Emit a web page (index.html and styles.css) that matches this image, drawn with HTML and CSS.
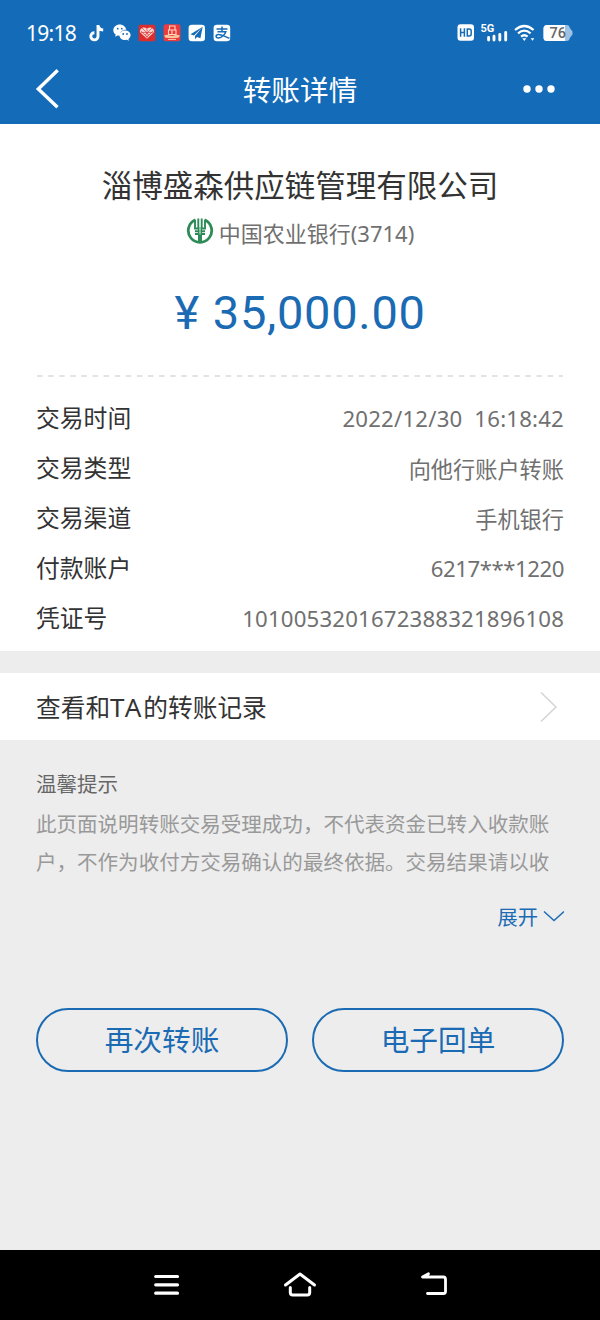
FILE: index.html
```
<!DOCTYPE html>
<html lang="zh-CN">
<head>
	<meta charset="UTF-8">
	<title>转账详情</title>
	<link rel="stylesheet" href="styles.css">
</head>
<body>

<header class="top">
	<div class="status">
		<span class="clock">19:18</span>
		<div class="apps">
			<svg width="17" height="18" viewBox="0 0 17 18"><path d="M9 1v11.2a3.6 3.6 0 1 1-3.6-3.5M9 1.5c.4 2.7 2.3 4.3 5.2 4.5" fill="none" stroke="#fff" stroke-width="2.900"/></svg>
			<svg width="18" height="18" viewBox="0 0 18 18">
				<path d="M6.800.5C3 .5.300 3 .300 6.200c0 1.800.9 3.300 2.400 4.400l-.6 2.200 2.400-1.300 2.500.3c-.6-4 2.400-6.200 6.300-6C12.600 2.600 10 .5 6.800.5z" fill="#fff"/>
				<path d="M12 6.500c-3.200 0-5.500 2-5.500 4.700S8.800 16 12 16l1.900-.3 2 1.100-.5-1.900c1.400-.9 2.200-2.200 2.200-3.700 0-2.700-2.400-4.700-5.600-4.700z" fill="#fff"/>
				<g fill="#146bb7"><circle cx="4.700" cy="4.700" r=".9"/><circle cx="8.800" cy="4.700" r=".9"/><circle cx="10.200" cy="10" r=".9"/><circle cx="14" cy="10" r=".9"/></g>
			</svg>
			<svg width="18" height="18" viewBox="0 0 18 18">
				<rect x=".7" y=".7" width="16.600" height="16.600" rx="1.500" fill="#dd2c2c"/>
				<path d="M9 14.800L2.300 8.600C.9 5 5.500 1.500 9 4.800c3.500-3.300 8.100.2 6.700 3.800z" fill="#fbd3cd"/>
				<path d="M3 7l6 6 6-6M4 4l7 7M14 4l-7 7M9 5v9M3 8.500h12" fill="none" stroke="#dd2c2c" stroke-width=".6"/>
			</svg>
			<svg width="18" height="18" viewBox="0 0 18 18">
				<rect x=".5" y=".3" width="17" height="17" rx="2.500" fill="#ea3b3e"/>
				<path d="M6.500 2h5.500v4H6.500zM5.500 6h3.500v4.500H5.500zM9 6h4v4.500H9z" fill="none" stroke="#ffd8bd" stroke-width="1.100"/>
				<path d="M1 11.500l3-.7 5 1.200 5-1.200 3 .7-1.500 2.300-6.500.5-6.500-.5z" fill="#f7c79c"/>
				<path d="M5 15.500h8" stroke="#ffb9a5"/>
			</svg>
			<svg width="18" height="18" viewBox="0 0 18 18">
				<rect x=".6" y=".8" width="16.400" height="16.400" rx="3.300" fill="#fff"/>
				<path d="M14.700 2.800L2.500 10.200l3.500 1.300zM14.700 2.800L7 12v3.200l2-2.300 3.400 1.300z" fill="#146bb7"/>
			</svg>
			<svg width="18" height="18" viewBox="0 0 18 18">
				<rect x=".6" y=".8" width="16.600" height="16.400" rx="3.300" fill="#fff"/>
				<path d="M3.500 5h11M9 2.500v5M4.500 7.700h8.300c-.8 2.600-4 6.300-7.300 6.300-3.200 0-3.200-3.400-.2-3.400 3 0 6.200 1.800 11.200 3.600" fill="none" stroke="#146bb7" stroke-width="1.500"/>
			</svg>
		</div>
		<div class="signals">
			<svg width="18" height="18" viewBox="0 0 18 18">
				<rect x=".5" y=".2" width="16.500" height="16.600" rx="3" fill="#fff"/>
				<path d="M3.600 4.300v8.400M7.400 4.300v8.400M3.600 8.500h3.800M10.300 5h2q1.900 0 1.900 1.900v3.200q0 1.900-1.900 1.900h-2z" fill="none" stroke="#146bb7" stroke-width="1.500"/>
			</svg>
			<svg class="cell" width="28" height="20" viewBox="0 0 28 20">
				<text class="net" x="0.500" y="9">5G</text>
				<path d="M8.600 14.500v2.500M14 13.300v3.700M19.800 11.500V17M25.700 9.500V17" stroke="#fff" stroke-width="2.900" stroke-linecap="round"/>
			</svg>
			<svg class="wifi" width="21" height="18" viewBox="0 0 21 18">
				<path d="M1 6q9.300-8 18.600 0M4 9.300q6.300-5.200 12.600 0M7 12.600q3.300-2.700 6.600 0" fill="none" stroke="#fff" stroke-width="2.200"/>
				<path d="M8.300 14.300h4L10.300 17zM16.600 14.300h3.700l-1.800 2.500z" fill="#fff"/>
			</svg>
			<svg class="battery" width="31" height="18" viewBox="0 0 31 18">
				<path d="M4 1h19.500q3 0 3.300 3l2.700 3.500v3L26.800 14q-.3 3-3.300 3H4q-3.500 0-3.500-3.500v-9Q.5 1 4 1z" fill="#9cc2e6"/>
				<path d="M4 1h18v16H4Q.5 17 .5 13.500v-9Q.5 1 4 1z" fill="#fff"/>
				<text class="level" x="6.500" y="14">76</text>
			</svg>
		</div>
	</div>
	<div class="navbar">
		<svg class="back" width="24" height="42" viewBox="0 0 24 42"><path d="M22.700 2.200L3.300 21l19.200 18.200" fill="none" stroke="#fff" stroke-width="3.400"/></svg>
		<h1>转账详情</h1>
		<svg class="more" width="34" height="10" viewBox="0 0 34 10"><g fill="#fff"><circle cx="5" cy="5" r="3.700"/><circle cx="17" cy="5" r="3.700"/><circle cx="29" cy="5" r="3.700"/></g></svg>
	</div>
</header>

<section class="detail">
	<h2>淄博盛森供应链管理有限公司</h2>
	<div class="bank">
		<svg width="28" height="28" viewBox="0 0 28 28">
			<path d="M9.500 1.800A11.700 11.700 0 1 0 18.500 1.800" fill="none" stroke="#2d8b57" stroke-width="2.800"/>
			<path d="M9 2v8.500h3.300V.500M19 2v8.500h-3.300V.500" fill="none" stroke="#2d8b57" stroke-width="1.900"/>
			<path d="M9 12.200h4.400v2H9zM14.600 12.200H19v2h-4.400zM9 15h4.400v2H9zM14.600 15H19v2h-4.400z" fill="#2d8b57"/>
			<path d="M12 16.500h4V25h-4zM12 9h1.400v8H12zM14.600 9H16v8h-1.400z" fill="#2d8b57"/>
		</svg>
		<span>中国农业银行(3714)</span>
	</div>
	<p class="amount"><span class="yen">¥</span>35,000.00</p>
	<svg class="divider" width="528" height="2" viewBox="0 0 528 2"><path d="M1 1h526" stroke="#dadada" stroke-width="1.500" stroke-dasharray="5.500 5.600"/></svg>
	<dl>
		<div class="item"><dt>交易时间</dt><dd class="time">2022/12/30&nbsp; 16:18:42</dd></div>
		<div class="item"><dt>交易类型</dt><dd>向他行账户转账</dd></div>
		<div class="item"><dt>交易渠道</dt><dd>手机银行</dd></div>
		<div class="item"><dt>付款账户</dt><dd class="account">6217***1220</dd></div>
		<div class="item"><dt>凭证号</dt><dd class="voucher">1010053201672388321896108</dd></div>
	</dl>
</section>

<section class="record">
	<span>查看和<span class="ta">TA</span>的转账记录</span>
	<svg width="18" height="32" viewBox="0 0 18 32"><path d="M1 1.500L16 16 1 30.500" fill="none" stroke="#d4d4d4" stroke-width="1.500"/></svg>
</section>

<section class="tips">
	<h3>温馨提示</h3>
	<p>此页面说明转账交易受理成功，不代表资金已转入收款账<br>户，不作为收付方交易确认的最终依据。交易结果请以收</p>
	<div class="expand">
		<span>展开</span>
		<svg width="22" height="14" viewBox="0 0 22 14"><path d="M2 1.500L12 10.500 22 1.500" fill="none" stroke="#1a6bb3" stroke-width="1.400"/></svg>
	</div>
</section>

<div class="buttons">
	<button>再次转账</button>
	<button>电子回单</button>
</div>

<footer class="system">
	<svg width="26" height="24" viewBox="0 0 26 24"><path d="M1.700 3.500h21.800M1.700 11.800h21.800M1.700 20.200h21.800" stroke="#fff" stroke-width="3.200" stroke-linecap="round"/></svg>
	<svg width="34" height="28" viewBox="0 0 34 28"><path d="M2.500 14L17 3l14.500 11M7.300 16.500v5q0 2.500 2.500 2.500h14.400q2.500 0 2.500-2.500v-5" fill="none" stroke="#fff" stroke-width="3" stroke-linecap="round" stroke-linejoin="round"/></svg>
	<svg width="28" height="26" viewBox="0 0 28 26"><path d="M7.500 21.500h16q2 0 2-2v-12q0-2.500-2-2.500h-21l6-3.200" fill="none" stroke="#fff" stroke-width="2.800" stroke-linecap="round" stroke-linejoin="round"/><path d="M2 5l7-4v4z" fill="#fff"/></svg>
</footer>

</body>
</html>
```

FILE: styles.css
```
* { box-sizing: border-box; }
body { margin: 0; width: 600px; height: 1320px; display: flex; flex-direction: column; overflow: hidden; }
body { background: #ededed; color: #333; font-family: "Noto Sans", "Noto Sans CJK SC", sans-serif; }
h1, h2, h3, p, dl, dd { margin: 0; font-weight: 400; }
svg { display: block; flex: none; }

.top { height: 124px; background: #146bb7; color: #fff; }
.status { height: 62px; padding: 3px 26px 0; display: flex; align-items: center; }
.clock { width: 62px; font-size: 21px; line-height: 30px; letter-spacing: -0.7px; }
.apps { padding-left: 1px; display: flex; gap: 7px; }
.signals { margin-left: auto; display: flex; align-items: center; }
.cell { margin-left: 5px; }
.wifi { margin-left: 6px; }
.battery { margin-left: 8px; }
.net { font: 700 11px Roboto, sans-serif; fill: #fff; }
.level { font: 500 14.5px Roboto, sans-serif; fill: #666; }
.navbar { height: 54px; padding: 0 44px 0 35px; display: flex; align-items: center; justify-content: space-between; }
.navbar h1 { font-size: 28.700px; line-height: 40px; padding: 2px 0 0 19px; }

.detail { height: 527px; background: #fff; padding: 38px 36px 0; }
.detail h2 { font-size: 30.500px; line-height: 46px; text-align: center; }
.bank { margin-top: 8px; display: flex; justify-content: center; align-items: center; gap: 5px; }
.bank svg { margin-bottom: 2px; }
.bank span { font-size: 22px; line-height: 34px; color: #707070; }
.amount { margin-top: 35px; font: 400 47px/56px Roboto, sans-serif; letter-spacing: 0.700px; color: #1a6bb3; text-align: center; }
.yen { margin-right: 13px; }
.divider { margin-top: 34px; }
.detail dl { padding-top: 15px; }
.item { height: 50px; display: flex; justify-content: space-between; align-items: center; }
.item dt { padding-bottom: 1px; font-size: 23.800px; }
.item dd { padding-top: 3px; font-size: 22.200px; color: #707070; }
.time { letter-spacing: 0.200px; }
.item .account { letter-spacing: -0.450px; }
.voucher { letter-spacing: 0.180px; }

.record { height: 67px; margin-top: 22px; padding: 0 42px 0 36px; background: #fff; display: flex; align-items: center; justify-content: space-between; }
.record > span { padding-bottom: 1px; font-size: 24.700px; }
.ta { font-size: 26px; letter-spacing: 2px; }

.tips { padding: 29px 36px 0; }
.tips h3 { font-size: 20.500px; line-height: 30px; color: #666; }
.tips p { margin-top: 6px; font-size: 20.540px; line-height: 38px; color: #999; white-space: nowrap; }
.expand { margin-top: 21px; display: flex; justify-content: flex-end; align-items: center; gap: 4px; font-size: 20.300px; line-height: 30px; color: #1a6bb3; }

.buttons { padding: 0 36px; margin-top: 76px; display: flex; gap: 24px; }
.buttons button { flex: 1; height: 64px; padding: 0 0 3px; border: 2px solid #1a6bb3; border-radius: 32px; background: none; font: inherit; font-size: 28.700px; color: #1a6bb3; }

.system { height: 70px; margin-top: auto; padding: 0 152px 0 154px; background: #000; display: flex; justify-content: space-between; align-items: center; }
```
